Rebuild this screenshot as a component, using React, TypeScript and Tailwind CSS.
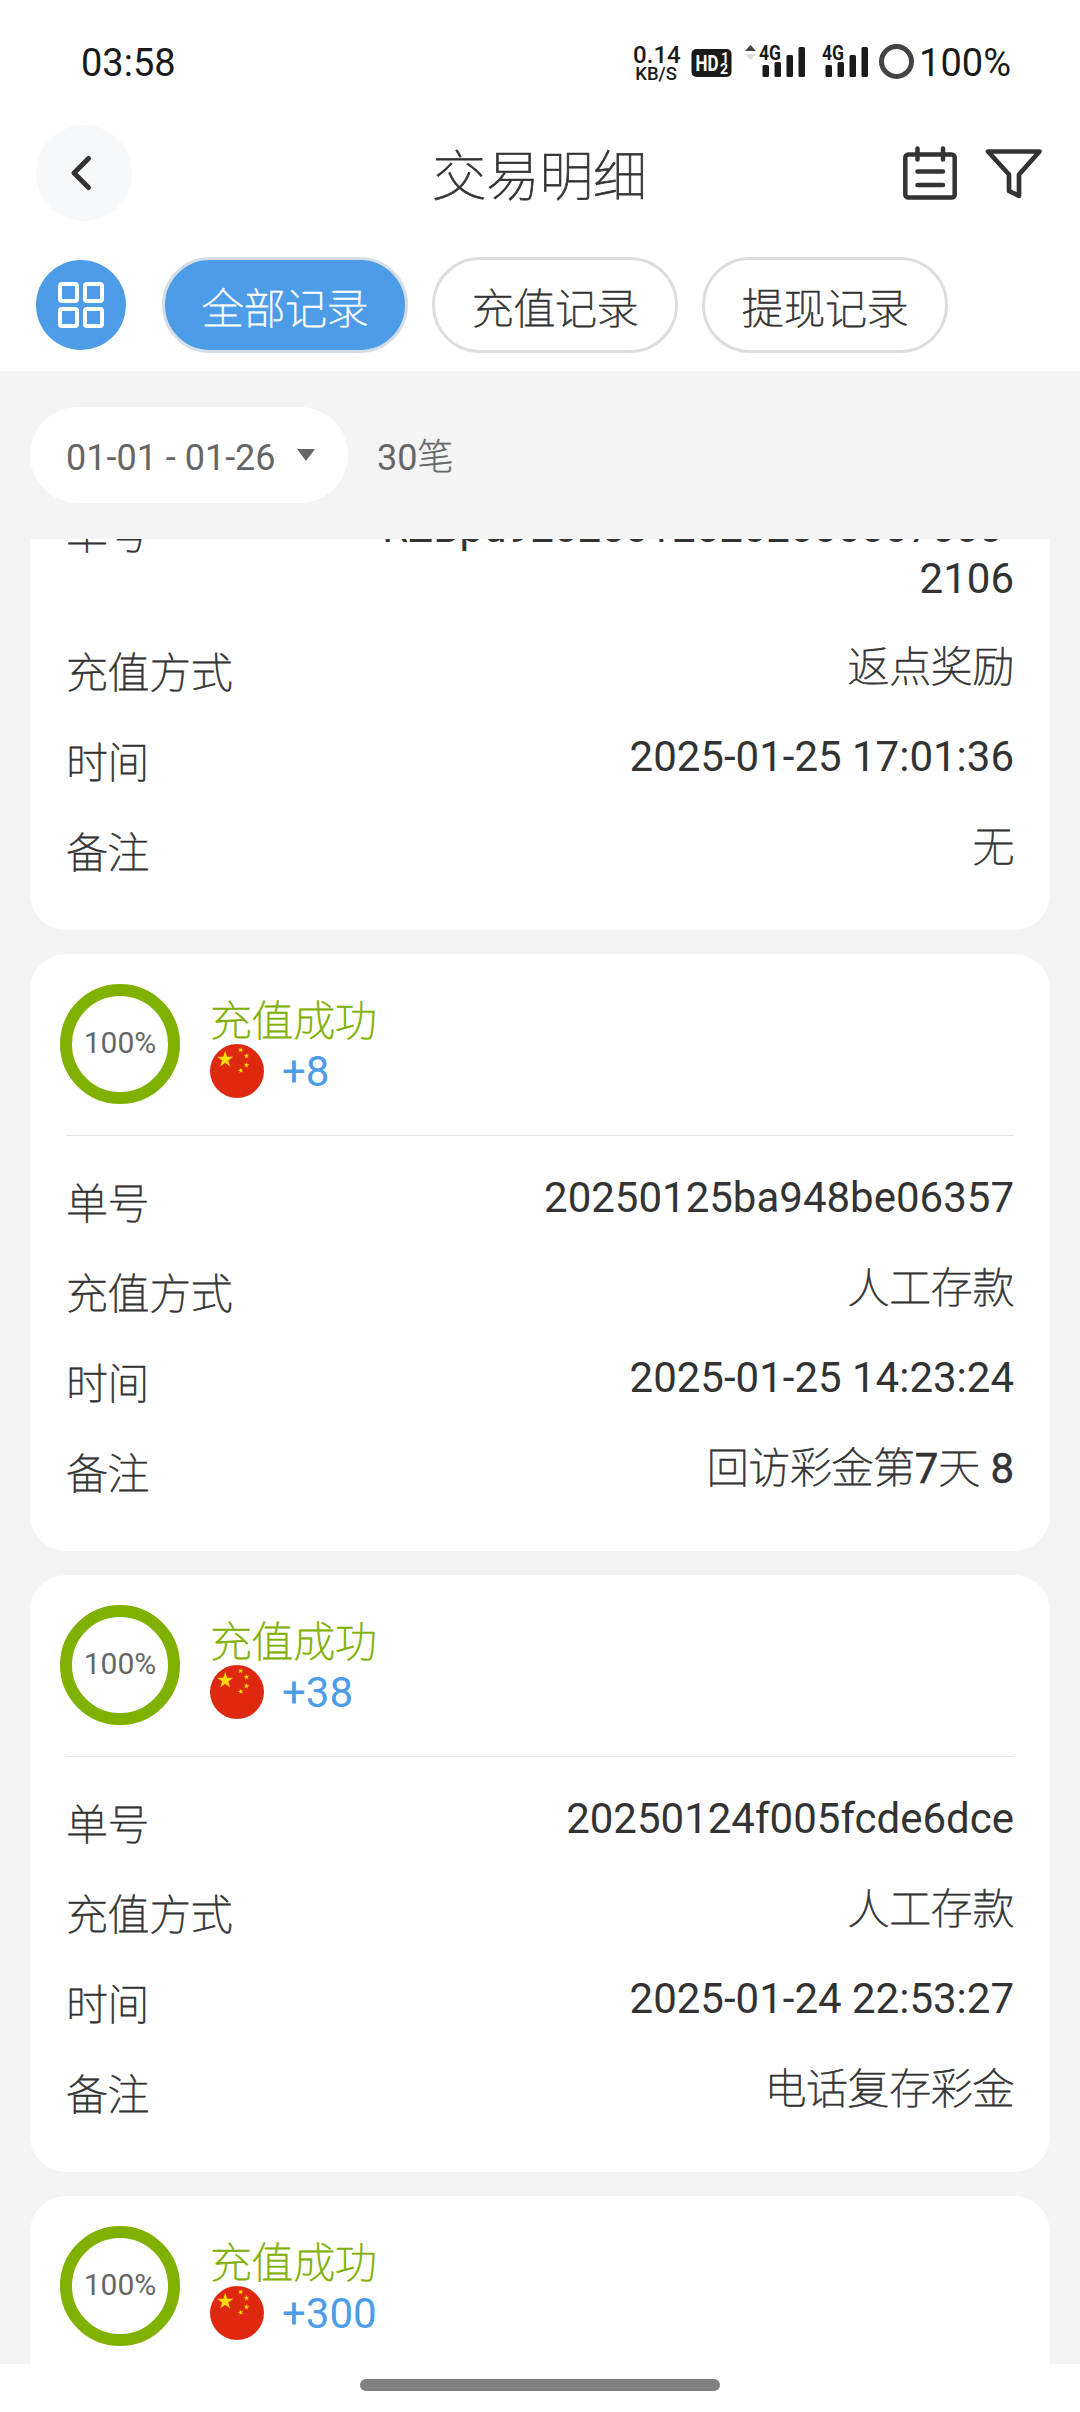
type Item = { label: string; value: string }
type Deposit = { amount: string; rows: Item[] }

const lastRows: Item[] = [
  { label: "单号", value: "RZBpd920250125202000007000- 2106" },
  { label: "充值方式", value: "返点奖励" },
  { label: "时间", value: "2025-01-25 17:01:36" },
  { label: "备注", value: "无" },
]

const deposits: Deposit[] = [
  {
    amount: "+8",
    rows: [
      { label: "单号", value: "20250125ba948be06357" },
      { label: "充值方式", value: "人工存款" },
      { label: "时间", value: "2025-01-25 14:23:24" },
      { label: "备注", value: "回访彩金第7天 8" },
    ],
  },
  {
    amount: "+38",
    rows: [
      { label: "单号", value: "20250124f005fcde6dce" },
      { label: "充值方式", value: "人工存款" },
      { label: "时间", value: "2025-01-24 22:53:27" },
      { label: "备注", value: "电话复存彩金" },
    ],
  },
  { amount: "+300", rows: [] },
]

const hasChinese = (text: string) => /[\u4e00-\u9fff]/.test(text)

// chinese runs are hairline, digits next to them are a bit heavier
function Mixed({ text }: { text: string }) {
  if (!hasChinese(text)) return <>{text}</>
  return <>
    {text.split(/([\u4e00-\u9fff]+)/).filter(Boolean).map((part, i) => (
      <span key={i} className={hasChinese(part) ? "font-thin tracking-[-0.4px] [-webkit-text-stroke:0.75px_currentColor]" : "[-webkit-text-stroke:0.5px_currentColor]"}>{part}</span>
    ))}
  </>
}

function Signal() {
  return <svg className="overflow-visible" width="47" height="32" viewBox="0 0 47 32" fill="#1a1a1a">
    <text x="0" y="15" fontSize="20" fontWeight="700" textLength="22" lengthAdjust="spacingAndGlyphs">4G</text>
    <rect x="3.500" y="20" width="6.500" height="12" rx="1.500" />
    <rect x="15.500" y="17" width="6.500" height="15" rx="1.500" />
    <rect x="27.500" y="10" width="6.500" height="22" rx="1.500" />
    <rect x="39.500" y="2" width="6.500" height="30" rx="1.500" />
  </svg>
}

function StatusBar() {
  return <div className="h-[125px] flex items-start justify-between pl-[81px] pr-[69px] text-[#1a1a1a]">
    <p className="mt-[41px] text-[38px] leading-[44px]">03:58</p>
    <div className="flex">
      <div className="mt-[43px] w-[46px] text-center font-medium">
        <p className="text-[24px] leading-[24px]">0.14</p>
        <p className="text-[18.500px] leading-[14px]">KB/S</p>
      </div>
      <svg className="mt-[48px] ml-[12px]" width="41" height="30" viewBox="0 0 41 30">
        <rect x="0.500" y="1" width="40" height="28" rx="5" fill="#1a1a1a" />
        <text x="4.500" y="23" fontSize="22" fontWeight="700" fill="#fff" textLength="23" lengthAdjust="spacingAndGlyphs">HD</text>
        <text x="30" y="14.500" fontSize="14" fontWeight="700" fill="#fff">1</text>
        <text x="29" y="26" fontSize="14" fontWeight="700" fill="#fff">2</text>
      </svg>
      <svg className="mt-[45px] ml-[13px]" width="11" height="16" viewBox="0 0 11 16">
        <path d="M0 6L5.500 0L11 6z" fill="#444" />
        <path d="M0 9L5.500 15L11 9z" fill="#ddd" />
      </svg>
      <div className="mt-[45px] ml-[3px]"><Signal /></div>
      <div className="mt-[45px] ml-[16px]"><Signal /></div>
      <div className="mt-[44px] ml-[10px] w-[35px] h-[35px] rounded-full border-[5px] border-[#444]"></div>
      <p className="mt-[41px] ml-[5px] text-[38px] leading-[44px]">100%</p>
    </div>
  </div>
}

function Header() {
  return <div className="h-[96px] px-[36px] flex items-center justify-between">
    <div className="w-[141px]">
      <div className="w-[96px] h-[96px] rounded-full bg-[#f7f8fa] flex items-center pl-[33px]">
        <svg width="24" height="38" viewBox="0 0 24 38" fill="none" stroke="#333" strokeWidth="5" strokeLinecap="round" strokeLinejoin="round"><path d="M19.500 4.500L5 19l14.500 14.500" /></svg>
      </div>
    </div>
    <p className="text-[54px] leading-[80px] pt-[9px] pr-[1px] text-[#333]"><Mixed text="交易明细" /></p>
    <div className="w-[141px] flex items-center">
      <svg width="54" height="54" viewBox="0 0 54 54" fill="none" stroke="#333" strokeWidth="4.500" strokeLinecap="round" strokeLinejoin="round">
        <rect x="2.300" y="8.500" width="49.400" height="43" rx="3" />
        <path d="M14.500 2.500v11M40 2.500v11M14.500 25.500h25.500M14.500 39h25.500" />
      </svg>
      <svg className="ml-[28px]" width="57" height="54" viewBox="0 0 57 54" fill="none" stroke="#333" strokeWidth="4.700" strokeLinecap="round" strokeLinejoin="round">
        <path d="M3 5.500h51.500L34 28.500v21.500l-10-5v-16.500z" />
      </svg>
    </div>
  </div>
}

function Tabs() {
  return <div className="h-[150px] pl-[36px] pt-[18px] flex items-center text-[42px] text-[#333]">
    <div className="w-[90px] h-[90px] rounded-full bg-[#4c9ce8] flex items-center justify-center">
      <svg width="46" height="46" viewBox="0 0 46 46" fill="none" stroke="#fff" strokeWidth="4">
        <rect x="2" y="2" width="17" height="17" rx="2" />
        <rect x="27" y="2" width="17" height="17" rx="2" />
        <rect x="2" y="27" width="17" height="17" rx="2" />
        <rect x="27" y="27" width="17" height="17" rx="2" />
      </svg>
    </div>
    <div className="flex gap-6 ml-[36px]">
      <p className="w-[246px] h-[96px] rounded-full border-[3px] border-[#d5dde5] bg-[#4c9ce8] text-white text-center leading-[100px]"><Mixed text="全部记录" /></p>
      <p className="w-[246px] h-[96px] rounded-full border-[3px] border-[#dddddd] text-center leading-[100px]"><Mixed text="充值记录" /></p>
      <p className="w-[246px] h-[96px] rounded-full border-[3px] border-[#dddddd] text-center leading-[100px]"><Mixed text="提现记录" /></p>
    </div>
  </div>
}

function Flag() {
  const star = "M0 -1L0.225 -0.309L0.951 -0.309L0.363 0.118L0.588 0.809L0 0.382L-0.588 0.809L-0.363 0.118L-0.951 -0.309L-0.225 -0.309Z"
  return <svg width="54" height="54" viewBox="0 0 54 54" fill="#ffde00">
    <circle cx="27" cy="27" r="27" fill="#de2910" />
    <path d={star} transform="translate(15.200 15.500) scale(8.500)" />
    <path d={star} transform="translate(30.700 6) rotate(15) scale(3)" />
    <path d={star} transform="translate(36.500 12) rotate(-10) scale(3)" />
    <path d={star} transform="translate(36.500 21) rotate(10) scale(3)" />
    <path d={star} transform="translate(30.700 26.500) rotate(-15) scale(3)" />
  </svg>
}

function Rows({ items }: { items: Item[] }) {
  return <div className="px-[36px] text-[42px] leading-[51px] text-[#333]">
    {items.map((item) => <div key={item.label} className="flex justify-between min-h-[90px]">
      <p className="mt-[12px]"><Mixed text={item.label} /></p>
      <p className={hasChinese(item.value) ? "mt-[6px]" : "max-w-[640px] text-right mt-[5px] pb-[32px]"}><Mixed text={item.value} /></p>
    </div>)}
  </div>
}

function Card({ deposit }: { deposit: Deposit }) {
  return <div className="bg-white rounded-[36px] h-[597px] shrink-0">
    <div className="flex h-[181px] pl-[30px] pt-[30px]">
      <div className="w-[120px] h-[120px] rounded-full border-[12px] border-[#80b000] flex items-center justify-center text-[30px] text-[#666] pb-[3px]">100%</div>
      <div className="ml-[30px]">
        <p className="h-[60px] leading-[75px] text-[42px] text-[#80b000]"><Mixed text="充值成功" /></p>
        <div className="flex items-center">
          <Flag />
          <p className="ml-[18px] pt-[2px] text-[42px] leading-[52px] text-[#4c9ce8]">{deposit.amount}</p>
        </div>
      </div>
    </div>
    <div className="h-px mx-[36px] bg-[#e6e6e6] mb-[31px]"></div>
    <Rows items={deposit.rows} />
  </div>
}

export default function App() {
  return <div className="w-[1080px] h-[2412px] overflow-hidden bg-white font-[Roboto,'Noto_Sans_CJK_SC',sans-serif]">
    <StatusBar />
    <Header />
    <Tabs />
    <div className="bg-[#f4f4f4]">
      <div className="h-[168px] px-[30px] flex items-center text-[36px] text-[#666]">
        <div className="w-[318px] h-[96px] rounded-full bg-white flex items-center pl-[36px]">
          <p className="pt-[5px]">01-01 - 01-26</p>
          <svg className="ml-[21px]" width="18" height="12" viewBox="0 0 18 12"><path d="M0 0h18L9 12z" fill="#666" /></svg>
        </div>
        <p className="ml-[29px] pt-[5px]">30<Mixed text="笔" /></p>
      </div>
      <div className="h-[1825px] px-[30px] overflow-hidden flex flex-col gap-6">
        <div className="h-[391px] shrink-0 bg-white rounded-b-[36px] overflow-hidden">
          <div className="-mt-[42px]"><Rows items={lastRows} /></div>
        </div>
        {deposits.map((d) => <Card key={d.amount} deposit={d} />)}
      </div>
    </div>
    <div className="h-12 bg-white flex justify-center pt-[15px]">
      <div className="w-[360px] h-[12px] rounded-full bg-[#808080]"></div>
    </div>
  </div>
}
